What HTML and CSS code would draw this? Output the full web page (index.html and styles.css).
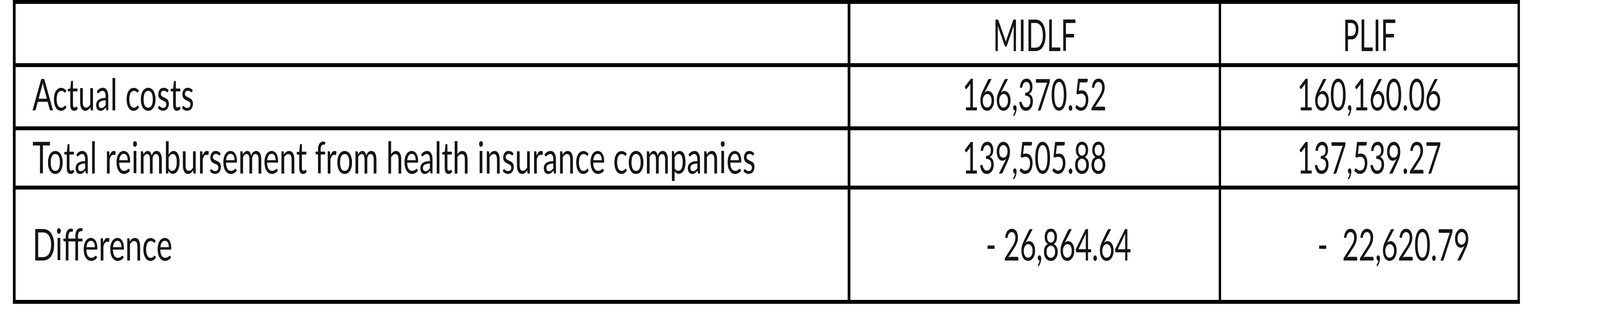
FILE: index.html
```html
<!DOCTYPE html>
<html lang="en">
<head>
<meta charset="utf-8">
<title>Costs vs reimbursement</title>
<link rel="stylesheet" href="styles.css">
</head>
<body>
<div class="sheet" role="table">
  <div class="cell head label" role="columnheader"></div>
  <div class="cell head num" role="columnheader"><span class="txt">MIDLF</span></div>
  <div class="cell head num" role="columnheader"><span class="txt">PLIF</span></div>

  <div class="cell r1 label" role="rowheader"><span class="txt">Actual costs</span></div>
  <div class="cell r1 num" role="cell"><span class="txt">166,370.52</span></div>
  <div class="cell r1 num" role="cell"><span class="txt">160,160.06</span></div>

  <div class="cell r2 label" role="rowheader"><span class="txt">Total reimbursement from health insurance companies</span></div>
  <div class="cell r2 num" role="cell"><span class="txt">139,505.88</span></div>
  <div class="cell r2 num" role="cell"><span class="txt">137,539.27</span></div>

  <div class="cell r3 label" role="rowheader"><span class="txt">Difference</span></div>
  <div class="cell r3 num neg" role="cell"><span class="txt">-&nbsp;26,864.64</span></div>
  <div class="cell r3 num neg" role="cell"><span class="txt">-&nbsp;&nbsp;22,620.79</span></div>
</div>
</body>
</html>
```

FILE: styles.css
```css
:root {
  /* one horizontal pixel of the 6289px-wide design, tied to the viewport width */
  --u: calc(100vw / 6289);
}

html, body {
  margin: 0;
  padding: 0;
  background: #ffffff;
}

body {
  font-family: Lato, "Liberation Sans", sans-serif;
  color: #141414;
}

.sheet {
  display: grid;
  grid-template-columns: calc(3271 * var(--u)) calc(1448 * var(--u)) calc(1165 * var(--u));
  grid-template-rows: 152px 152px 142px 283px;
  column-gap: calc(10 * var(--u));
  row-gap: 10px;
  padding: 10px calc(10 * var(--u));
  width: max-content;
  margin-left: calc(51 * var(--u));
  background: #000000;
}

.cell {
  background: #ffffff;
  display: flex;
  align-items: center;
  white-space: nowrap;
  padding-bottom: 6px;
}

.label {
  justify-content: flex-start;
  padding-left: calc(67 * var(--u));
  --k: 1.07;
}

.num {
  justify-content: center;
  --k: 1;
}

.head {
  padding-top: 4px;
  padding-bottom: 0;
  --k: 0.965;
}

.r1 {
  padding-bottom: 16px;
}

.neg {
  padding-left: calc(190 * var(--u));
}

.txt {
  display: inline-block;
  font-size: calc(112 * var(--u));
  line-height: 1;
}

.label .txt {
  transform-origin: left center;
}

.num .txt {
  transform-origin: center center;
  letter-spacing: -0.5px;
}

@supports (transform: scaleX(tan(atan2(1px, 1px)))) {
  .txt {
    font-size: 112px;
    transform: scaleX(calc(tan(atan2(100vw, 6289px)) * var(--k)));
  }
}
```
